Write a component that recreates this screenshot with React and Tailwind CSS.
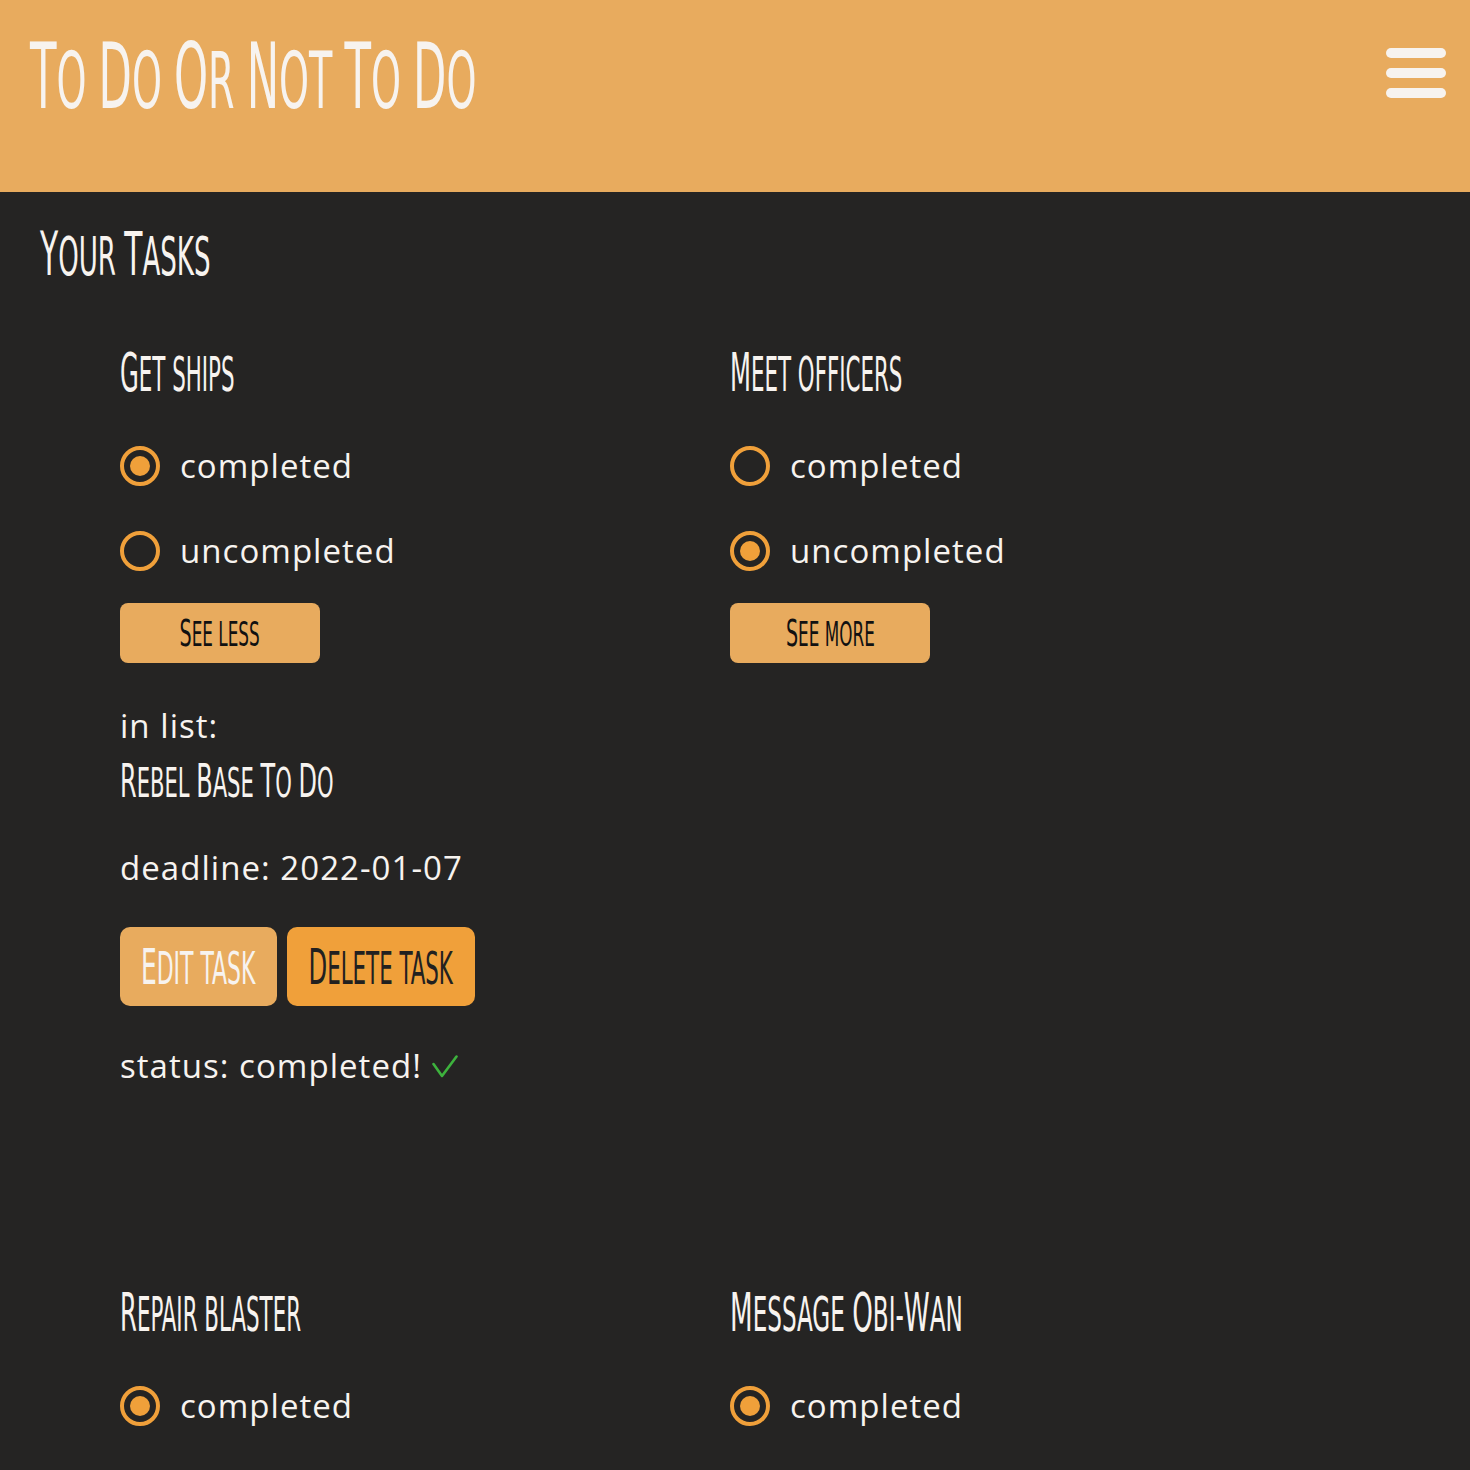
import React from "react";

function SC({ text, className = "" }) {
  const parts = [];
  for (const ch of text) {
    const upper = ch !== ch.toLowerCase();
    const last = parts[parts.length - 1];
    if (last && last.upper === upper) last.t += ch;
    else parts.push({ upper, t: ch });
  }
  return (
    <span className={`inline-block whitespace-nowrap ${className}`}>
      {parts.map((p, i) =>
        p.upper ? (
          <span key={i}>{p.t}</span>
        ) : (
          <span key={i} className="uppercase text-[0.88em]">
            {p.t}
          </span>
        )
      )}
    </span>
  );
}

function Radio({ checked, label }) {
  return (
    <div className="flex items-center gap-[20px] h-[40px] text-[33px] leading-[40px]">
      <span className="w-[40px] h-[40px] rounded-full border-4 border-[#F0A03A] flex items-center justify-center">
        {checked && <span className="w-[20px] h-[20px] rounded-full bg-[#F0A03A]" />}
      </span>
      <span>{label}</span>
    </div>
  );
}

function Task({ title, titleScale, completed, open, short }) {
  return (
    <div className="flex flex-col items-start">
      <h3 className="text-[54px] leading-none font-normal tracking-normal font-['DejaVu_Sans_Condensed',sans-serif]">
        <SC text={title} className={`origin-left ${titleScale}`} />
      </h3>
      <div className="mt-[46px] flex flex-col gap-[45px]">
        <Radio checked={completed} label="completed" />
        {!short && <Radio checked={!completed} label="uncompleted" />}
      </div>
      {!short && (
        <button className="mt-[32px] w-[200px] h-[60px] rounded-[8px] bg-[#E8AB5E] text-[#111] flex items-center justify-center text-[38px] leading-none tracking-normal font-['DejaVu_Sans_Condensed',sans-serif]">
          <SC text={open ? "See less" : "See more"} className="origin-center scale-x-[0.56]" />
        </button>
      )}
      {open && (
        <>
          <p className="mt-[43px] text-[33px] leading-[40px]">in list:</p>
          <h4 className="mt-[11px] text-[47px] leading-none font-normal tracking-normal font-['DejaVu_Sans_Condensed',sans-serif]">
            <SC text="Rebel Base To Do" className="origin-left scale-x-[0.567]" />
          </h4>
          <p className="mt-[44px] text-[33px] leading-[40px]">deadline: 2022-01-07</p>
          <div className="mt-[39px] flex gap-[10px]">
            <button className="w-[157px] h-[79px] rounded-[10px] bg-[#E8AB5E] text-[#F7F3EF] flex items-center justify-center text-[50px] leading-none tracking-normal font-['DejaVu_Sans_Condensed',sans-serif]">
              <SC text="Edit task" className="origin-center scale-x-[0.555]" />
            </button>
            <button className="w-[188px] h-[79px] rounded-[10px] bg-[#F0A03A] text-[#222120] flex items-center justify-center text-[50px] leading-none tracking-normal font-['DejaVu_Sans_Condensed',sans-serif]">
              <SC text="Delete task" className="origin-center scale-x-[0.54]" />
            </button>
          </div>
          <p className="mt-[40px] text-[33px] leading-[40px] flex items-center">
            <span>status: completed!</span>
            <svg className="ml-[10px]" width="26" height="23" viewBox="0 0 26 23" fill="none">
              <path d="M1.5 9 L10 21 L24.5 1.5" stroke="#3DB23D" strokeWidth="2.6" strokeLinecap="round" strokeLinejoin="round" />
            </svg>
          </p>
        </>
      )}
    </div>
  );
}

export default function App() {
  return (
    <div className="min-h-[1470px] bg-[#252423] text-[#F7F3EF] font-['Open_Sans',sans-serif] tracking-[0.065em]">
      <header className="h-[192px] bg-[#E8AB5E] flex justify-between items-start">
        <h1 className="pl-[30px] pt-[32px] text-[90px] leading-none font-normal tracking-normal font-['DejaVu_Sans_Condensed',sans-serif]">
          <SC text="To Do Or Not To Do" className="origin-left scale-x-[0.535]" />
        </h1>
        <div className="pr-[24px] pt-[48px] flex flex-col gap-[10px]">
          <span className="block w-[60px] h-[10px] rounded-full bg-[#F7F3EF]" />
          <span className="block w-[60px] h-[10px] rounded-full bg-[#F7F3EF]" />
          <span className="block w-[60px] h-[10px] rounded-full bg-[#F7F3EF]" />
        </div>
      </header>
      <main className="pt-[32px]">
        <h2 className="pl-[40px] text-[60px] leading-none font-normal tracking-normal font-['DejaVu_Sans_Condensed',sans-serif]">
          <SC text="Your Tasks" className="origin-left scale-x-[0.55]" />
        </h2>
        <div className="mt-[62px] pl-[120px] grid grid-cols-[610px_610px] gap-y-[200px]">
          <Task title="Get ships" titleScale="scale-x-[0.5]" completed open />
          <Task title="Meet officers" titleScale="scale-x-[0.5]" completed={false} />
          <Task title="Repair blaster" titleScale="scale-x-[0.5]" completed short />
          <Task title="Message Obi-Wan" titleScale="scale-x-[0.54]" completed short />
        </div>
      </main>
    </div>
  );
}
